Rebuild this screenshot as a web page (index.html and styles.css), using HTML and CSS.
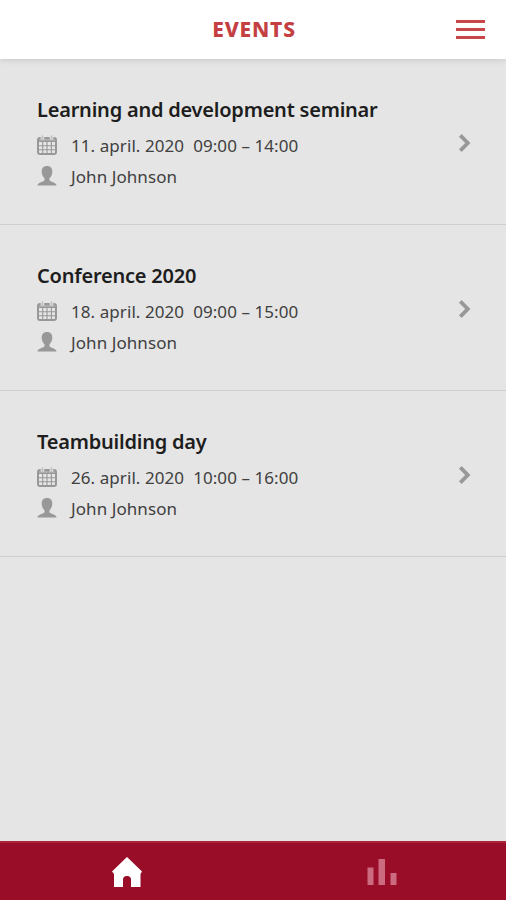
FILE: index.html
```html
<!DOCTYPE html>
<html lang="en">
<head>
<meta charset="utf-8">
<title>Events</title>
<link rel="stylesheet" href="styles.css">
</head>
<body>
<svg class="sprite" aria-hidden="true">
  <symbol id="calendar" viewBox="0 0 20 20">
    <rect x="1" y="3" width="18" height="16" rx="2" fill="none" stroke="currentColor" stroke-width="2"/>
    <path d="M1 3h18v3.500H1z" fill="currentColor" opacity=".75"/>
    <path d="M1 6.500h18M1 10.700h18M1 14.700h18M5.700 6v13M10 6v13M14.400 6v13" fill="none" stroke="currentColor" stroke-width="1.100"/>
    <path d="M5.500 0v4.500M14.500 0v4.500" stroke="#e5e5e5" stroke-width="3.600"/>
    <path d="M5.500.5v3.500M14.500.5v3.500" stroke="currentColor" stroke-width="1.500" opacity=".5"/>
  </symbol>
  <symbol id="person" viewBox="0 0 20 20">
    <path d="M10 0C6.500 0 4.700 2.200 4.700 5.500c0 3 1.200 5.300 2.800 6.700v2.100C7 15.900 1 16 .4 19.500h19.200C19 16 13 15.900 12.500 14.300v-2.100c1.600-1.400 2.800-3.700 2.800-6.700C15.300 2.200 13.500 0 10 0z" fill="currentColor"/>
  </symbol>
  <symbol id="chevron" viewBox="0 0 14 20">
    <path d="M2.300 2.300 9.800 10 2.300 17.700" fill="none" stroke="currentColor" stroke-width="3.800"/>
  </symbol>
</svg>
<div class="app">
  <header class="header">
    <h1 class="heading">EVENTS</h1>
    <div class="menu"><span></span><span></span><span></span></div>
  </header>
  <main class="events">
    <article class="event">
      <div class="info">
        <h2 class="title">Learning and development seminar</h2>
        <p class="line"><svg class="icon"><use href="#calendar"/></svg><span class="date">11. april. 2020</span><span>09:00 – 14:00</span></p>
        <p class="line"><svg class="icon"><use href="#person"/></svg><span>John Johnson</span></p>
      </div>
      <svg class="chevron"><use href="#chevron"/></svg>
    </article>
    <article class="event">
      <div class="info">
        <h2 class="title">Conference 2020</h2>
        <p class="line"><svg class="icon"><use href="#calendar"/></svg><span class="date">18. april. 2020</span><span>09:00 – 15:00</span></p>
        <p class="line"><svg class="icon"><use href="#person"/></svg><span>John Johnson</span></p>
      </div>
      <svg class="chevron"><use href="#chevron"/></svg>
    </article>
    <article class="event">
      <div class="info">
        <h2 class="title">Teambuilding day</h2>
        <p class="line"><svg class="icon"><use href="#calendar"/></svg><span class="date">26. april. 2020</span><span>10:00 – 16:00</span></p>
        <p class="line"><svg class="icon"><use href="#person"/></svg><span>John Johnson</span></p>
      </div>
      <svg class="chevron"><use href="#chevron"/></svg>
    </article>
  </main>
  <nav class="tabs">
    <div class="tab">
      <svg class="home" viewBox="0 0 32 32"><path d="M16 1 31 15.500 29.500 18v13H20V23.500C20 21.500 18.500 20 16.500 20h-1C13.500 20 12 21.500 12 23.500V31H3V18L1 15.500z" fill="#fff"/></svg>
    </div>
    <div class="tab">
      <svg class="stats" viewBox="0 0 30 28"><path d="M.5 9.500h6V27h-6zM11.500 1h6.500v26h-6.500zM23.500 15h6v12h-6z" fill="#cc6b80"/></svg>
    </div>
  </nav>
</div>
</body>
</html>
```
FILE: styles.css
```css
* { box-sizing: border-box; }

body {
  margin: 0;
  font-family: "Noto Sans", sans-serif;
  color: #1d1d1d;
}

h1, h2, p { margin: 0; }

.sprite { display: none; }

.app {
  display: flex;
  flex-direction: column;
  height: 900px;
  background: #e5e5e5;
}

.header {
  display: grid;
  grid-template-columns: 1fr auto 1fr;
  align-items: center;
  height: 59px;
  padding: 0 21px 0 23px;
  background: #fff;
  box-shadow: 0 1px 6px rgba(0, 0, 0, .13);
}

.heading {
  grid-column: 2;
  margin-top: -2px;
  font-size: 21px;
  line-height: 28px;
  font-weight: 800;
  letter-spacing: .8px;
  color: #c43f42;
}

.menu {
  justify-self: end;
  display: flex;
  flex-direction: column;
  gap: 4.500px;
  width: 29px;
}

.menu span {
  height: 3.500px;
  background: #c9474a;
}

.events { flex: 1; }

.event {
  display: flex;
  justify-content: space-between;
  height: 166px;
  padding: 37px 34px 0 37px;
  border-bottom: 1px solid #cfcfcf;
}

.title {
  margin-bottom: 6px;
  font-size: 20px;
  line-height: 28px;
  font-weight: 600;
  letter-spacing: -.22px;
  white-space: nowrap;
}

.line {
  display: flex;
  align-items: center;
  height: 31px;
  font-size: 17px;
  letter-spacing: .07px;
  color: #404040;
  white-space: nowrap;
}

.icon {
  width: 20px;
  height: 20px;
  margin: -2px 14px 0 0;
  color: #989898;
}

.date { margin-right: 9px; }

.chevron {
  width: 14px;
  height: 20px;
  margin-top: 37px;
  color: #989898;
}

.tabs {
  display: flex;
  height: 59px;
  background: #990d29;
  border-top: 2px solid #ac2239;
}

.tab {
  display: flex;
  flex: 1;
  align-items: center;
  justify-content: center;
}

.home { width: 32px; height: 32px; }

.stats { width: 30px; height: 28px; margin: 0 0 0 5px; }
```
